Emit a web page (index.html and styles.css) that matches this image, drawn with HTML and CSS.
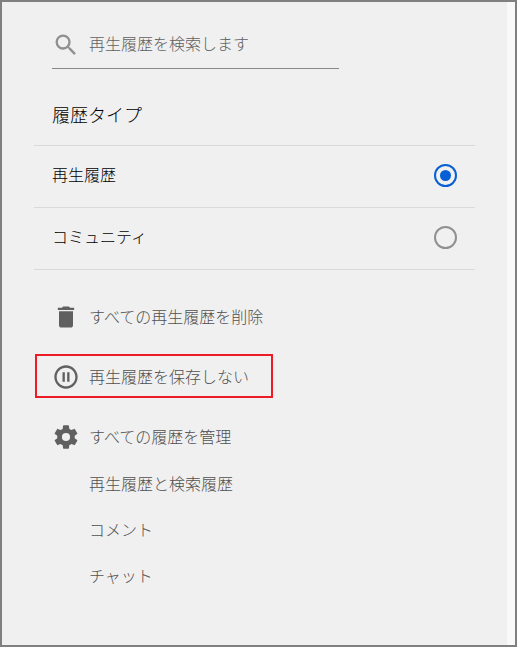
FILE: index.html
```html
<!DOCTYPE html>
<html lang="ja">
<head>
	<meta charset="UTF-8">
	<title>再生履歴</title>
	<link rel="stylesheet" href="styles.css">
</head>
<body>
	<main class="panel">
		<form class="search">
			<svg class="icon" viewBox="0 0 24 24" aria-hidden="true">
				<path d="M15.5 14h-.79l-.28-.27A6.47 6.47 0 0 0 16 9.5 6.5 6.5 0 1 0 9.5 16c1.61 0 3.09-.59 4.23-1.57l.27.28v.79l5 4.99L20.49 19l-4.99-5zm-6 0a4.5 4.5 0 1 1 0-9 4.5 4.5 0 0 1 0 9z"/>
			</svg>
			<input type="text" class="search-text" placeholder="再生履歴を検索します" aria-label="再生履歴を検索します">
		</form>

		<section class="types">
			<h2 class="title">履歴タイプ</h2>
			<label class="type" for="typeWatch">
				<span>再生履歴</span>
				<input type="radio" class="radio" id="typeWatch" name="type" checked>
			</label>
			<label class="type" for="typeCommunity">
				<span>コミュニティ</span>
				<input type="radio" class="radio" id="typeCommunity" name="type">
			</label>
		</section>

		<section class="actions">
			<button type="button" class="action">
				<svg class="icon" viewBox="0 0 24 24" aria-hidden="true">
					<path d="M6 19c0 1.1.9 2 2 2h8c1.1 0 2-.9 2-2V7H6v12zM19 4h-3.5l-1-1h-5l-1 1H5v2h14V4z"/>
				</svg>
				<span>すべての再生履歴を削除</span>
			</button>
			<button type="button" class="action marked">
				<svg class="icon" viewBox="0 0 24 24" aria-hidden="true">
					<path d="M9 16h2V8H9v8zm3-14C6.48 2 2 6.48 2 12s4.48 10 10 10 10-4.48 10-10S17.52 2 12 2zm0 18c-4.41 0-8-3.59-8-8s3.59-8 8-8 8 3.59 8 8-3.59 8-8 8zm1-4h2V8h-2v8z"/>
				</svg>
				<span>再生履歴を保存しない</span>
			</button>
			<button type="button" class="action">
				<svg class="icon" viewBox="0 0 24 24" aria-hidden="true">
					<path d="M19.43 12.98c.04-.32.07-.64.07-.98s-.03-.66-.07-.98l2.11-1.65c.19-.15.24-.42.12-.64l-2-3.46c-.12-.22-.39-.3-.61-.22l-2.49 1c-.52-.4-1.08-.73-1.69-.98l-.38-2.65A.49.49 0 0 0 14 2h-4c-.25 0-.46.18-.49.42l-.38 2.65c-.61.25-1.17.59-1.69.98l-2.49-1c-.23-.09-.49 0-.61.22l-2 3.46c-.13.22-.07.49.12.64l2.11 1.65c-.04.32-.07.65-.07.98s.03.66.07.98l-2.11 1.65c-.19.15-.24.42-.12.64l2 3.46c.12.22.39.3.61.22l2.49-1c.52.4 1.08.73 1.69.98l.38 2.65c.03.24.24.42.49.42h4c.25 0 .46-.18.49-.42l.38-2.65c.61-.25 1.17-.59 1.69-.98l2.49 1c.23.09.49 0 .61-.22l2-3.46c.12-.22.07-.49-.12-.64l-2.11-1.65zM12 15.5a3.5 3.5 0 1 1 0-7 3.5 3.5 0 0 1 0 7z"/>
				</svg>
				<span>すべての履歴を管理</span>
			</button>
			<nav class="links">
				<a href="#">再生履歴と検索履歴</a>
				<a href="#">コメント</a>
				<a href="#">チャット</a>
			</nav>
		</section>
	</main>
</body>
</html>
```
FILE: styles.css
```css
*{
	box-sizing:border-box;
}
body{
	margin:0;
	min-height:100vh;
	display:flex;
	border:2px solid #808080;
	padding-right:8px;
	background-color:#f9f9f9;
	color:#000;
	font-family:"Noto Sans CJK JP", sans-serif;
	font-size:16px;
	font-weight:300;
	line-height:20px;
}
input, button{
	font:inherit;
}
.panel{
	flex:1;
	padding:18px 32px;
	background-color:#f0f0f0;
}
.icon{
	width:28px;
	height:28px;
	flex:none;
	fill:#606060;
}

/* search box */
.search{
	width:65%;
	margin-left:18px;
	padding:11px 0 9px;
	display:flex;
	align-items:center;
	gap:9px;
	border-bottom:1px solid #888;
}
.search .icon{
	fill:#909090;
}
.search-text{
	flex:1;
	min-width:0;
	height:28px;
	padding:0 0 4px;
	border:0;
	outline:0;
	background:none;
	color:#505050;
}
.search-text::placeholder{
	color:#606060;
	opacity:1;
}

/* history type */
.title{
	margin:0;
	padding:32px 18px 18px;
	border-bottom:1px solid #d9d9d9;
	font-size:18px;
	font-weight:300;
	line-height:26px;
}
.type{
	display:flex;
	align-items:flex-start;
	justify-content:space-between;
	padding:18px 18px 20px;
	border-bottom:1px solid #d9d9d9;
	cursor:pointer;
}
.radio{
	appearance:none;
	width:23px;
	height:23px;
	margin:0;
	padding:4px;
	border:2px solid #909090;
	border-radius:50%;
	cursor:pointer;
}
.radio:checked{
	border-color:#065fd4;
	background-color:#065fd4;
	background-clip:content-box;
}

/* actions */
.actions{
	padding:24px 1px 0;
	display:flex;
	flex-direction:column;
	align-items:flex-start;
	gap:16px;
}
.action{
	display:flex;
	align-items:center;
	gap:9px;
	padding:7px 22px 5px 15px;
	border:2px solid transparent;
	background:none;
	color:#505050;
	cursor:pointer;
}
.action span{
	padding-bottom:2px;
}
.marked{
	border-color:#ed1c24;
}
.links{
	margin-top:-14px;
	padding-left:54px;
	display:flex;
	flex-direction:column;
	line-height:46px;
}
.links a{
	color:#505050;
	text-decoration:none;
}
```
